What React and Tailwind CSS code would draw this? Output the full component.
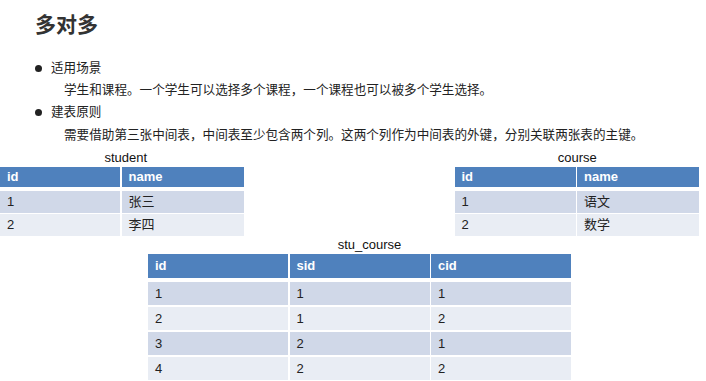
import React from 'react'

const font = { fontFamily: '"Liberation Sans", "Noto Sans CJK SC", sans-serif' }

const Table = ({ caption, captionPad, cols, widths, rows, rowH, headH }) => {
    return (
        <div className="flex flex-col w-fit">
            <div className={`h-[16px] leading-[16px] text-[13px] text-[#111] text-center ${captionPad}`}>{caption}</div>
            <div className="mt-[1px] flex flex-col">
                {/* Header */}
                <div className={`flex gap-x-[1.5px] ${headH}`}>
                    {cols.map((c, i) => (
                        <div key={i} className={`${widths[i]} bg-[#4f81bd] text-white font-bold text-[13px] pl-[7px] flex items-center`}>
                            {c}
                        </div>
                    ))}
                </div>
                {/* Rows */}
                <div className="mt-[4px] flex flex-col gap-y-[1.5px]">
                    {rows.map((r, ri) => (
                        <div key={ri} className={`flex gap-x-[1.5px] ${rowH}`}>
                            {r.map((v, ci) => (
                                <div key={ci} className={`${widths[ci]} ${ri % 2 === 0 ? 'bg-[#d0d8e8]' : 'bg-[#e9edf4]'} text-[#222] text-[13px] pl-[7px] flex items-center`}>
                                    {v}
                                </div>
                            ))}
                        </div>
                    ))}
                </div>
            </div>
        </div>
    )
}

export default function App() {
    return (
        <div className="w-[706px] h-[381px] bg-white overflow-hidden" style={font}>
            {/* 标题 */}
            <div className="pt-[11px] pl-[35px] h-[39px] leading-[28px] text-[21px] font-bold text-[#333]">多对多</div>

            {/* 列表 */}
            <div className="mt-[18px] pl-[35px] text-[12.6px] text-[#222]">
                <div className="flex items-center h-[22.3px]">
                    <span className="w-[7px] h-[7px] rounded-full bg-[#222]"></span>
                    <span className="ml-[9px]">适用场景</span>
                </div>
                <div className="h-[22.3px] leading-[22.3px] pl-[29px]">学生和课程。一个学生可以选择多个课程，一个课程也可以被多个学生选择。</div>
                <div className="flex items-center h-[22.3px]">
                    <span className="w-[7px] h-[7px] rounded-full bg-[#222]"></span>
                    <span className="ml-[9px]">建表原则</span>
                </div>
                <div className="h-[22.3px] leading-[22.3px] pl-[29px]">需要借助第三张中间表，中间表至少包含两个列。这两个列作为中间表的外键，分别关联两张表的主键。</div>
            </div>

            {/* 两张主表 */}
            <div className="mt-[4px] flex justify-between pr-[7px]">
                <Table
                    caption="student"
                    captionPad="pl-[8px]"
                    cols={['id', 'name']}
                    widths={['w-[120px]', 'w-[122px]']}
                    headH="h-[20px]"
                    rowH="h-[21.5px]"
                    rows={[['1', '张三'], ['2', '李四']]}
                />
                <Table
                    caption="course"
                    captionPad="pl-[1px]"
                    cols={['id', 'name']}
                    widths={['w-[121px]', 'w-[122px]']}
                    headH="h-[20px]"
                    rowH="h-[21.5px]"
                    rows={[['1', '语文'], ['2', '数学']]}
                />
            </div>

            {/* 中间表 */}
            <div className="mt-[1px] pl-[148px]">
                <Table
                    caption="stu_course"
                    captionPad="pl-[20px]"
                    cols={['id', 'sid', 'cid']}
                    widths={['w-[140px]', 'w-[140px]', 'w-[140px]']}
                    headH="h-[24px]"
                    rowH="h-[23.5px]"
                    rows={[['1', '1', '1'], ['2', '1', '2'], ['3', '2', '1'], ['4', '2', '2']]}
                />
            </div>
        </div>
    )
}
